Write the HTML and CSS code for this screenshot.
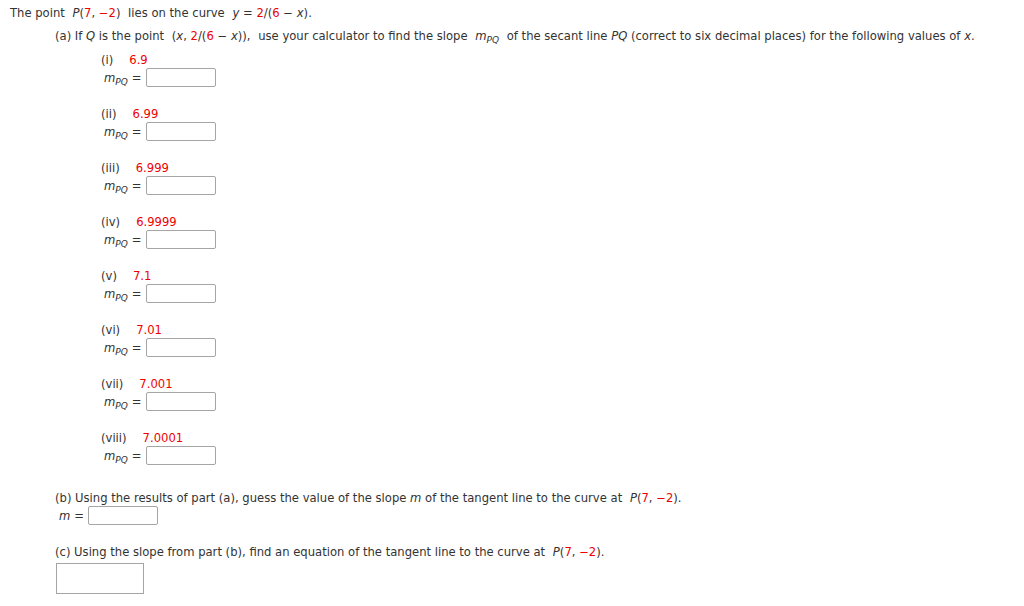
FILE: index.html
```html
<!DOCTYPE html>
<html>
<head>
<meta charset="utf-8">
<link rel="stylesheet" href="styles.css">
</head>
<body>
<div class="page">
  <p class="intro">The point <span class="math mr"><i>P</i>(<span class="red">7</span>, <span class="red">−2</span>)</span> lies on the curve <span class="math"><i>y</i> = <span class="red">2</span>/(<span class="red">6</span> − <i>x</i>)</span>.</p>
  <div class="part">
    <p class="q">(a) If <i>Q</i> is the point <span class="math mr">(<i>x</i>, <span class="red">2</span>/(<span class="red">6</span> − <i>x</i>)),</span> use your calculator to find the slope <span class="math mr"><i>m</i><sub><i>PQ</i></sub></span> of the secant line <i>PQ</i> (correct to six decimal places) for the following values of <i>x</i>.</p>
    <div class="items">
      <div class="item"><div class="lbl">(i)<span class="val red">6.9</span></div><div class="row"><span class="mpq"><i>m</i><sub><i>PQ</i></sub></span> =<span class="box"></span></div></div>
      <div class="item"><div class="lbl">(ii)<span class="val red">6.99</span></div><div class="row"><span class="mpq"><i>m</i><sub><i>PQ</i></sub></span> =<span class="box"></span></div></div>
      <div class="item"><div class="lbl">(iii)<span class="val red">6.999</span></div><div class="row"><span class="mpq"><i>m</i><sub><i>PQ</i></sub></span> =<span class="box"></span></div></div>
      <div class="item"><div class="lbl">(iv)<span class="val red">6.9999</span></div><div class="row"><span class="mpq"><i>m</i><sub><i>PQ</i></sub></span> =<span class="box"></span></div></div>
      <div class="item"><div class="lbl">(v)<span class="val red">7.1</span></div><div class="row"><span class="mpq"><i>m</i><sub><i>PQ</i></sub></span> =<span class="box"></span></div></div>
      <div class="item"><div class="lbl">(vi)<span class="val red">7.01</span></div><div class="row"><span class="mpq"><i>m</i><sub><i>PQ</i></sub></span> =<span class="box"></span></div></div>
      <div class="item"><div class="lbl">(vii)<span class="val red">7.001</span></div><div class="row"><span class="mpq"><i>m</i><sub><i>PQ</i></sub></span> =<span class="box"></span></div></div>
      <div class="item"><div class="lbl">(viii)<span class="val red">7.0001</span></div><div class="row"><span class="mpq"><i>m</i><sub><i>PQ</i></sub></span> =<span class="box"></span></div></div>
    </div>
    <p class="q qb">(b) Using the results of part (a), guess the value of the slope <i>m</i> of the tangent line to the curve at <span class="math"><i>P</i>(<span class="red">7</span>, <span class="red">−2</span>)</span>.</p>
    <div class="row rowb"><span class="mpq"><i>m</i></span> =<span class="box"></span></div>
    <p class="q qc">(c) Using the slope from part (b), find an equation of the tangent line to the curve at <span class="math"><i>P</i>(<span class="red">7</span>, <span class="red">−2</span>)</span>.</p>
    <div class="bigbox"></div>
  </div>
</div>
</body>
</html>
```

FILE: styles.css
```css
html, body {
  margin: 0;
  padding: 0;
  background: #fff;
}
body {
  font-family: "DejaVu Sans", Verdana, sans-serif;
  font-size: 11.6px;
  line-height: 18px;
  color: #333;
}
.page {
  padding: 3px 0 0 10px;
}
p {
  margin: 0;
  height: 17px;
  padding-top: 1px;
}
i {
  font-style: italic;
}
.red {
  color: #e00;
}
.math {
  margin-left: 4px;
}
.math.mr {
  margin-right: 4px;
}
.part {
  padding-left: 45px;
  margin-top: 5px;
}
.items {
  margin-top: 6px;
  padding-left: 46px;
}
.item {
  height: 54px;
}
.lbl {
  height: 17px;
  padding-top: 1px;
}
.val {
  margin-left: 16px;
}
.row {
  display: flex;
  align-items: center;
  height: 19px;
  padding-left: 3px;
}
sub {
  font-size: 9px;
  line-height: 0;
  vertical-align: baseline;
  position: relative;
  top: 3px;
}
.mpq {
  margin-right: 4px;
}
.box {
  display: inline-block;
  width: 68px;
  height: 17px;
  border: 1px solid #a5a5a5;
  border-radius: 2px;
  margin-left: 4px;
}
.qb {
  margin-top: 6px;
}
.rowb {
  padding-left: 4px;
}
.qc {
  margin-top: 17px;
}
.bigbox {
  width: 86px;
  height: 29px;
  border: 1px solid #a5a5a5;
  margin-top: 3px;
  margin-left: 1px;
}
```
